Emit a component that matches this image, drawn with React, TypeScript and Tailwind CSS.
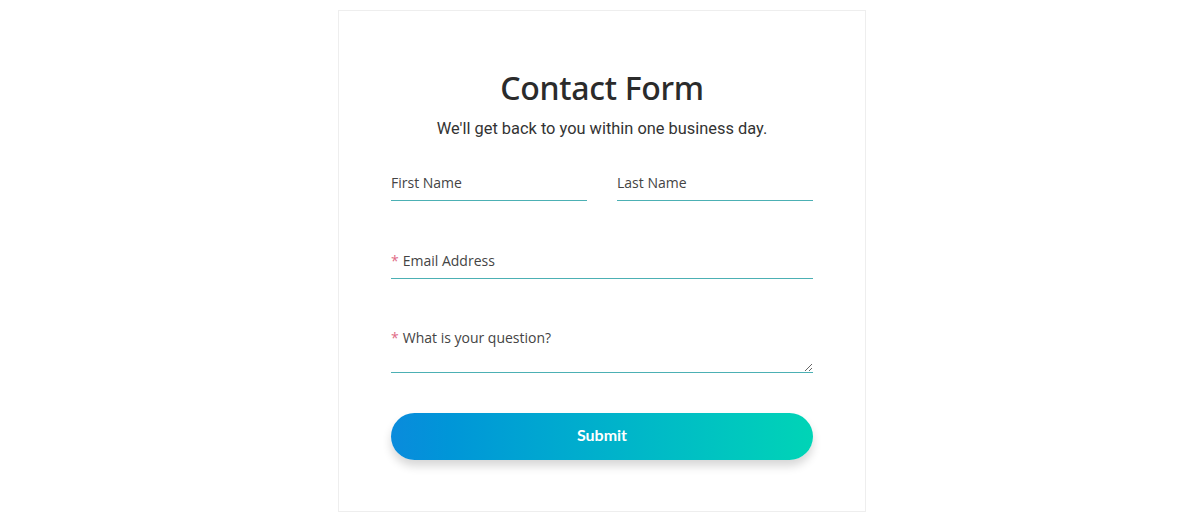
import React from "react";

const labelCls =
	"pointer-events-none absolute left-0 top-0 text-[14px] leading-[20px] text-[#444] font-['Open_Sans',sans-serif]";
const lineCls =
	"block w-full bg-transparent border-0 border-b border-[#4cb0b4] outline-none";

const Field = ({ label, required }: { label: string; required?: boolean }) => (
	<div className="relative">
		<input type="text" className={`${lineCls} h-[28px]`} />
		<span className={labelCls}>
			{required && <span className="text-[#e06a86] mr-[4px]">*</span>}
			{label}
		</span>
	</div>
);

const App = () => {
	return (
		<div className="min-h-[524px] bg-white flex justify-center pt-[10px] pl-[10px]">
			<div className="w-[528px] h-[502px] border border-[#eeeeee] px-[52px] pt-[54px]">
				<h1 className="text-center text-[32px] leading-[46px] font-medium text-[#2b2b2b] font-['Noto_Sans',sans-serif] tracking-[-0.3px]">
					Contact Form
				</h1>
				<p className="mt-[6px] text-center text-[16.4px] leading-[24px] text-[#333] font-['Roboto',sans-serif]">
					We'll get back to you within one business day.
				</p>

				<form className="mt-[32px]" onSubmit={(e) => e.preventDefault()}>
					{/* names */}
					<div className="grid grid-cols-2 gap-[30px]">
						<Field label="First Name" />
						<Field label="Last Name" />
					</div>

					<div className="mt-[50px]">
						<Field label="Email Address" required />
					</div>

					<div className="relative mt-[49px]">
						<textarea className={`${lineCls} h-[45px] resize-y`} />
						<span className={labelCls}>
							<span className="text-[#e06a86] mr-[4px]">*</span>
							What is your question?
						</span>
					</div>

					<button
						type="submit"
						className="mt-[40px] w-full h-[47px] pb-[4px] rounded-full bg-gradient-to-r from-[#0a8bdc] to-[#00d4b6] text-white text-[16px] font-bold font-['Lato',sans-serif] shadow-[0_6px_10px_rgba(0,0,0,0.16)]"
					>
						Submit
					</button>
				</form>
			</div>
		</div>
	);
};

export default App;
